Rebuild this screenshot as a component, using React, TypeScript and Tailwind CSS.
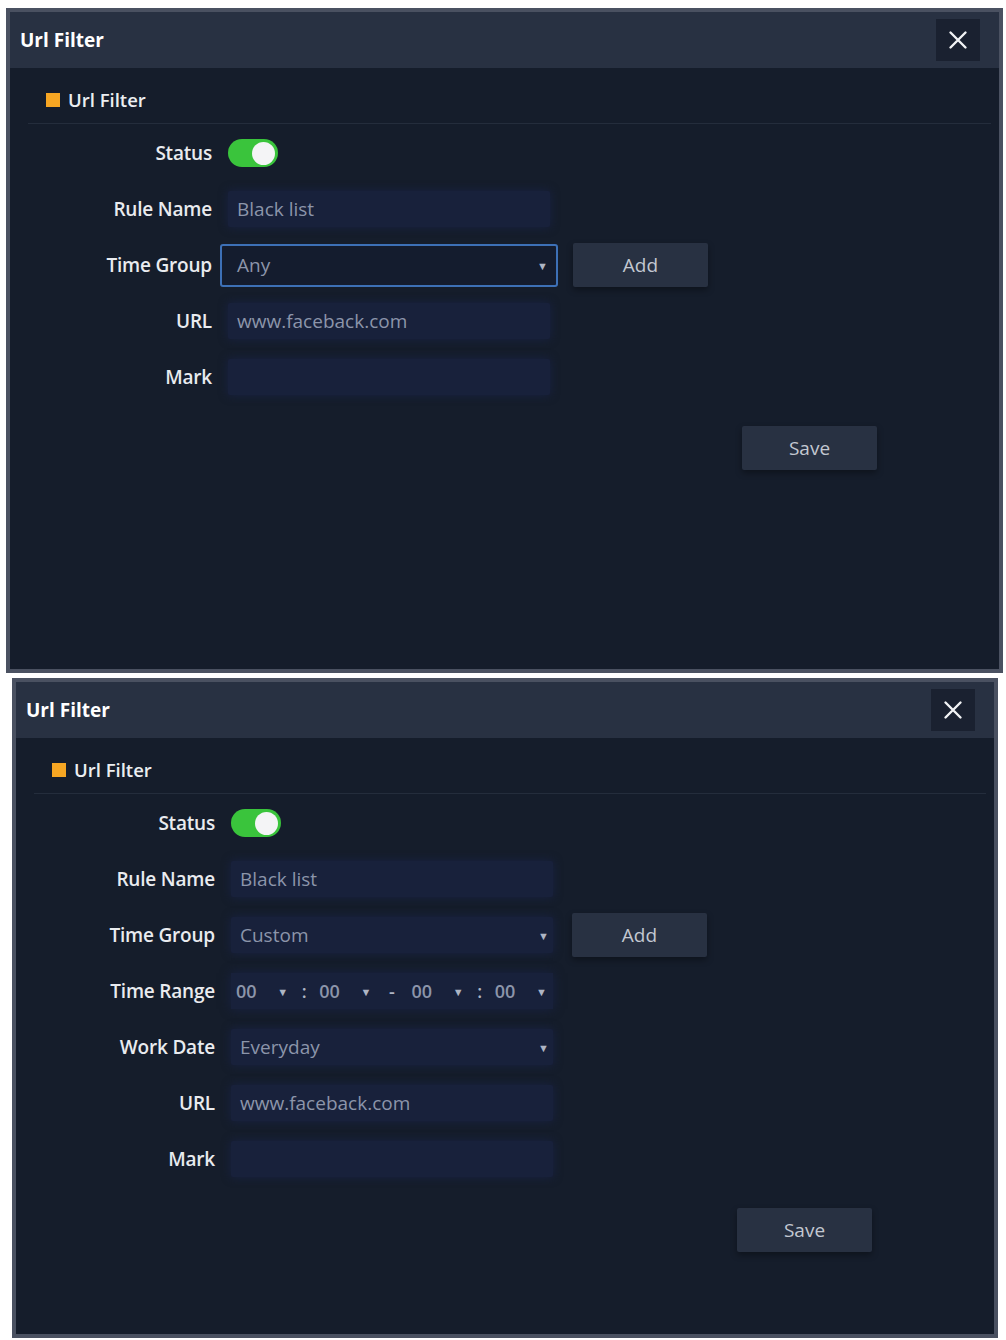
import React from 'react';

const FONT = { fontFamily: '"Open Sans", "Noto Sans", Arial, sans-serif' };

const Caret: React.FC = () => (
    <span className="text-[11px] leading-none text-[#aeb5c4]">▼</span>
);

const Field: React.FC<{ label: string; children?: React.ReactNode }> = ({ label, children }) => (
    <div className="flex h-[56px] items-center">
        <div className="w-[190px] text-right text-[19px] font-semibold tracking-[-0.2px] text-[#e9ebef]">{label}</div>
        <div className="ml-[8px] flex items-center">{children}</div>
    </div>
);

const TextBox: React.FC<{ value?: string }> = ({ value }) => (
    <div className="ml-[8px] flex h-[36px] w-[322px] items-center rounded-[2px] bg-[#18213b] px-[9px] text-[19px] text-[#8c95aa] shadow-[0_0_10px_rgba(24,34,70,0.9)]">
        {value}
    </div>
);

const SelectBox: React.FC<{ value: string; focused?: boolean }> = ({ value, focused }) =>
    focused ? (
        <div className="flex h-[43px] w-[338px] items-center justify-between rounded-[3px] border-2 border-[#3d70b6] bg-[#141c2e] pl-[15px] pr-[8px] text-[19px] text-[#8c95aa]">
            <span>{value}</span>
            <Caret />
        </div>
    ) : (
        <div className="ml-[8px] flex h-[36px] w-[322px] items-center justify-between rounded-[2px] bg-[#18213b] pl-[9px] pr-[4px] text-[19px] text-[#8c95aa] shadow-[0_0_10px_rgba(24,34,70,0.9)]">
            <span>{value}</span>
            <Caret />
        </div>
    );

const MiniSelect: React.FC = () => (
    <div className="flex h-[36px] flex-1 items-center justify-between bg-[#18213b] pl-[5px] pr-[6px] text-[18px] text-[#8c95aa]">
        <span>00</span>
        <Caret />
    </div>
);

const TimeRange: React.FC = () => (
    <div className="ml-[8px] flex w-[322px] items-center text-[18px] font-semibold text-[#aeb5c4] shadow-[0_0_10px_rgba(24,34,70,0.9)]">
        <MiniSelect />
        <span className="flex h-[36px] w-[20px] items-center justify-center bg-[#18213b]">:</span>
        <MiniSelect />
        <span className="flex h-[36px] w-[29px] items-center justify-center bg-[#18213b]">-</span>
        <MiniSelect />
        <span className="flex h-[36px] w-[20px] items-center justify-center bg-[#18213b]">:</span>
        <MiniSelect />
    </div>
);

const DarkButton: React.FC<{ label: string }> = ({ label }) => (
    <button className="flex h-[44px] w-[135px] items-center justify-center rounded-[2px] bg-[#283142] text-[19px] text-[#c3c8d1] shadow-[0_3px_6px_rgba(0,0,0,0.35)]">
        {label}
    </button>
);

const Toggle: React.FC = () => (
    <div className="ml-[8px] flex h-[28px] w-[50px] items-center justify-end rounded-full bg-[#3ac43c] pr-[3px]">
        <div className="h-[23px] w-[23px] rounded-full bg-[#f4f4f6]" />
    </div>
);

const Dialog: React.FC<{ custom?: boolean; className: string }> = ({ custom, className }) => (
    <div className={`flex flex-col border-4 border-[#4a5161] bg-[#151d2b] ${className}`} style={FONT}>
        {/* title bar */}
        <div className="flex h-[56px] shrink-0 items-center justify-between bg-[#283142] pl-[10px] pr-[19px]">
            <span className="text-[19px] font-bold text-white">Url Filter</span>
            <button className="flex h-[42px] w-[44px] items-center justify-center bg-[#1a2130]">
                <svg width="22" height="22" viewBox="0 0 22 22" fill="none" stroke="#f2f3f5" strokeWidth="2.4" strokeLinecap="round">
                    <path d="M3.5 3.5L18.5 18.5M18.5 3.5L3.5 18.5" />
                </svg>
            </button>
        </div>

        <div className="flex flex-1 flex-col pt-[20px]">
            <div className="flex h-[24px] items-center pl-[36px]">
                <span className="h-[14px] w-[14px] bg-[#f6a623]" />
                <span className="ml-[8px] text-[18.5px] font-semibold text-[#eceef1]">Url Filter</span>
            </div>
            <div className="ml-[18px] mr-[8px] mt-[11px] h-px bg-[#242d3c]" />

            <div className={`mt-[1px] flex flex-col ${custom ? 'pl-[9px]' : 'pl-[12px]'}`}>
                <Field label="Status">
                    <Toggle />
                </Field>
                <Field label="Rule Name">
                    <TextBox value="Black list" />
                </Field>
                <Field label="Time Group">
                    <SelectBox value={custom ? 'Custom' : 'Any'} focused={!custom} />
                    <div className={custom ? 'ml-[19px]' : 'ml-[15px]'}>
                        <DarkButton label="Add" />
                    </div>
                </Field>
                {custom && (
                    <>
                        <Field label="Time Range">
                            <TimeRange />
                        </Field>
                        <Field label="Work Date">
                            <SelectBox value="Everyday" />
                        </Field>
                    </>
                )}
                <Field label="URL">
                    <TextBox value="www.faceback.com" />
                </Field>
                <Field label="Mark">
                    <TextBox />
                </Field>
            </div>

            <div className="mt-[21px] flex justify-end pr-[122px]">
                <DarkButton label="Save" />
            </div>
        </div>
    </div>
);

export default function App() {
    return (
        <div className="flex min-h-[1340px] w-[1006px] flex-col bg-white pt-[8px]">
            <Dialog className="ml-[6px] h-[665px] w-[997px]" />
            <Dialog custom className="ml-[12px] mt-[5px] h-[660px] w-[986px]" />
        </div>
    );
}
